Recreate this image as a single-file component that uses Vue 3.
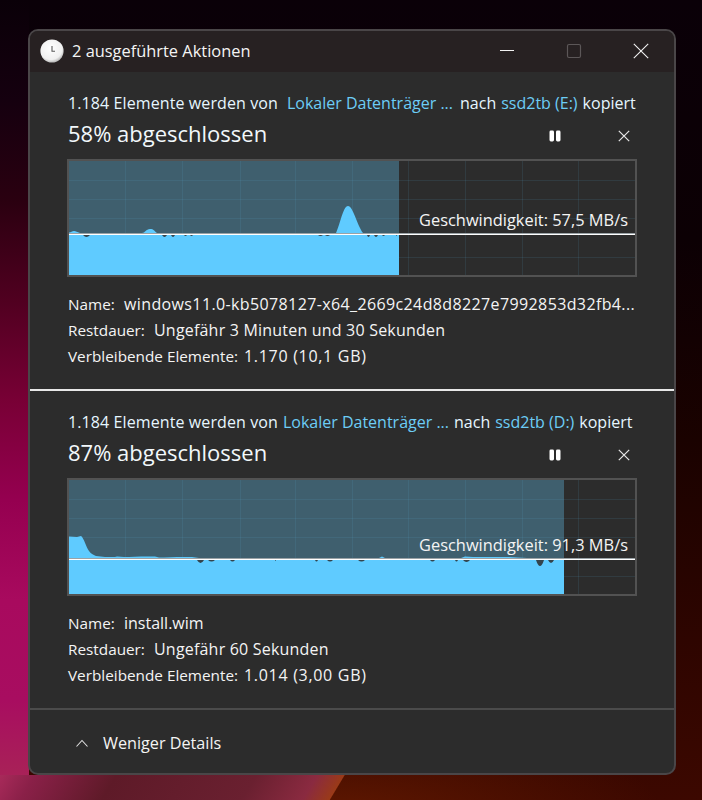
<script setup>
const gridX = [56, 113, 171, 226, 283, 339, 396, 453, 509]
const gridY = [19, 38, 57, 96]

const jobs = [
  {
    source: 'Lokaler Datenträger ...',
    target: 'ssd2tb (E:)',
    percent: 58,
    speed: '57,5 MB/s',
    details: [
      { label: 'Name:', value: 'windows11.0-kb5078127-x64_2669c24d8d8227e7992853d32fb4...', track: 0.38 },
      { label: 'Restdauer:', value: 'Ungefähr 3 Minuten und 30 Sekunden', track: 0.2 },
      { label: 'Verbleibende Elemente:', value: '1.170 (10,1 GB)', track: 0.7 }
    ],
    fillW: 330,
    lineY: 73,
    sourceGap: 9,
    midGap: 7,
    area: 'M0 114V71.5C2 71.5 3 70 5 70S8 71 11 72H73C76 72 77 68 81 68S85 70 88 72H267C271 64 274 45 279 45S288 64 294 72H330V114Z',
    dips: [[14, 7, 2], [93, 5, 2], [102, 4, 2], [115, 3, 1], [121, 3, 1], [249, 5, 1], [256, 5, 1], [298, 3, 2], [305, 4, 2], [313, 3, 1], [327, 1, 1]]
  },
  {
    source: 'Lokaler Datenträger ...',
    target: 'ssd2tb (D:)',
    percent: 87,
    speed: '91,3 MB/s',
    details: [
      { label: 'Name:', value: 'install.wim', track: 0 },
      { label: 'Restdauer:', value: 'Ungefähr 60 Sekunden', track: 0.2 },
      { label: 'Verbleibende Elemente:', value: '1.014 (3,00 GB)', track: 0.7 }
    ],
    fillW: 495,
    lineY: 79,
    sourceGap: 5,
    midGap: 5,
    area: 'M0 114V56.5L8 57L12 56C15 58 17 67 20 71C22 74 25 75 27 76L36 77H46L48 76.5L55 77H60L72 76.5L86 76.5L90 77.5H95L108 77H123L130 78H310L313 76.5L316 78H392L396 76.5L404 77H440L458 78H495V114Z',
    dips: [[128, 7, 3], [139, 7, 1.5], [161, 5, 1.5], [206, 1, 1], [246, 3, 1.5], [258, 6, 1.5], [289, 7, 1.5], [361, 5, 1.5], [386, 3, 1.5], [394, 7, 2], [467, 8, 6], [479, 6, 3]]
  }
]
</script>

<template>
  <div class="desktop">
    <div class="window">
      <header class="titlebar">
        <svg class="clock" viewBox="0 0 24 24" width="24" height="24" aria-hidden="true">
          <defs>
            <radialGradient id="clockFace" cx="45%" cy="38%" r="68%">
              <stop offset="0" stop-color="#ffffff" />
              <stop offset="0.72" stop-color="#f0f0f0" />
              <stop offset="1" stop-color="#9c9c9c" />
            </radialGradient>
          </defs>
          <circle cx="12" cy="12" r="11.6" fill="url(#clockFace)" />
          <path d="M12 7V12.3H15" fill="none" stroke="#5a5a5a" stroke-width="1.1" />
        </svg>
        <span class="title">2 ausgeführte Aktionen</span>
        <div class="controls">
          <svg viewBox="0 0 16 16" width="16" height="16" aria-hidden="true"><path d="M1 7.5H15" stroke="#f2f2f2" stroke-width="1" /></svg>
          <svg viewBox="0 0 16 16" width="16" height="16" aria-hidden="true"><rect x="1.5" y="1.5" width="13" height="13" rx="1.5" fill="none" stroke="#5c5758" stroke-width="1.2" /></svg>
          <svg viewBox="0 0 16 16" width="16" height="16" aria-hidden="true"><path d="M.8.8L15.2 15.2M15.2.8L.8 15.2" stroke="#f2f2f2" stroke-width="1.1" /></svg>
        </div>
      </header>

      <section v-for="job in jobs" :key="job.target" class="job">
        <div class="summary">
          <span class="lead">1.184 Elemente werden von</span>
          <span class="link" :style="{ marginLeft: job.sourceGap + 'px' }">{{ job.source }}</span>
          <span :style="{ marginLeft: job.midGap + 'px' }">nach</span>
          <span class="link gap">{{ job.target }}</span>
          <span class="gap">kopiert</span>
        </div>
        <div class="status">
          <h2>{{ job.percent }}% abgeschlossen</h2>
          <div class="actions">
            <svg viewBox="0 0 12 12" width="12" height="12" aria-hidden="true">
              <rect x="0.5" y="0.5" width="4.5" height="11" rx="1.4" fill="#fff" />
              <rect x="7" y="0.5" width="4.5" height="11" rx="1.4" fill="#fff" />
            </svg>
            <svg viewBox="0 0 12 12" width="12" height="12" aria-hidden="true">
              <path d="M.8.8L11.2 11.2M11.2.8L.8 11.2" stroke="#e8e8e8" stroke-width="1.2" />
            </svg>
          </div>
        </div>
        <div class="chart">
          <svg viewBox="0 0 566 114" width="566" height="114" aria-hidden="true">
            <rect :width="job.fillW" height="114" fill="#3f5f6e" />
            <path v-for="x in gridX" :key="x" :d="`M${x + 0.5} 0V114`" stroke="#5cb8e6" stroke-opacity="0.11" />
            <path v-for="y in gridY" :key="y" :d="`M0 ${y + 0.5}H566`" stroke="#5cb8e6" stroke-opacity="0.11" />
            <path :d="job.area" fill="#5fcbff" />
            <path v-for="d in job.dips" :key="d[0]" :d="`M${d[0]} ${job.lineY + 1}Q${d[0] + d[1] / 2} ${job.lineY + 1 + d[2] * 2} ${d[0] + d[1]} ${job.lineY + 1}z`" fill="#33444d" />
            <path :d="`M0 ${job.lineY - 0.5}H566`" stroke="#9aa2a6" stroke-width="1" />
            <path :d="`M0 ${job.lineY + 0.5}H566`" stroke="#ffffff" stroke-width="1" />
          </svg>
          <span class="speed" :style="{ top: job.lineY - 25 + 'px' }">Geschwindigkeit: {{ job.speed }}</span>
        </div>
        <dl class="details">
          <div v-for="row in job.details" :key="row.label" class="detail">
            <dt>{{ row.label }}</dt>
            <dd :style="{ letterSpacing: row.track + 'px' }">{{ row.value }}</dd>
          </div>
        </dl>
      </section>

      <footer class="footer">
        <svg viewBox="0 0 14 8" width="14" height="8" aria-hidden="true">
          <path d="M1.5 7.5L7 1.5L12.5 7.5" fill="none" stroke="#e0e0e0" stroke-width="1.1" />
        </svg>
        <span>Weniger Details</span>
      </footer>
    </div>
  </div>
</template>

<style>
html, body { margin: 0; padding: 0; background: #0a0008; }
</style>

<style scoped>
.desktop {
  width: 702px;
  height: 800px;
  padding: 29px 0 0 28px;
  box-sizing: border-box;
  overflow: hidden;
  font-family: "Open Sans", "Noto Sans", sans-serif;
  color: #f4f4f4;
  background:
    linear-gradient(121deg, #a82a5a 0, #8a2048 30px, #5e1a28 100px, #6a2030 220px, #8a2a40 272px, #9a3a18 295px, rgba(0, 0, 0, 0) 296px) 0 775px / 350px 25px no-repeat,
    linear-gradient(180deg, #0a0008 0, #15000f 100px, #2a0010 200px, #500020 300px, #780035 400px, #950050 500px, #a80a5e 600px, #a80d60 700px, #a82058 770px, #a82a5a 800px) 0 0 / 29px 800px no-repeat,
    radial-gradient(ellipse 320px 90px at 340px 810px, rgba(120, 35, 0, 0.55), rgba(120, 35, 0, 0) 100%),
    linear-gradient(180deg, #0a0008 0%, #0c0004 30%, #1a0200 55%, #2e0500 80%, #3c0800 100%);
}
.window {
  width: 648px;
  height: 746px;
  box-sizing: border-box;
  border: 2px solid #4a4648;
  border-radius: 10px;
  background: #2c2c2c;
  overflow: hidden;
  display: flex;
  flex-direction: column;
}
.titlebar {
  height: 41px;
  flex: none;
  box-sizing: border-box;
  padding: 0 0 2px 10px;
  display: flex;
  align-items: center;
  background: #272122;
}
.title {
  margin-left: 8px;
  font-size: 16.4px;
}
.controls {
  margin-left: auto;
  display: flex;
  gap: 51px;
  padding-right: 25px;
  align-items: center;
}
.job {
  height: 319px;
  flex: none;
  box-sizing: border-box;
  padding: 19px 38px 0 37px;
  border-bottom: 2px solid #e8e8e8;
}
.job:nth-of-type(2) {
  border-bottom-color: #4b4b4b;
}
.summary {
  display: flex;
  align-items: baseline;
  padding-left: 1px;
  white-space: nowrap;
  font-size: 16px;
  line-height: 24px;
  color: #e6f6ff;
}
.lead { letter-spacing: 0.1px; }
.link { color: #6ccdf6; }
.gap { margin-left: 5px; }
.status {
  display: flex;
  justify-content: space-between;
  align-items: center;
  height: 36px;
  padding-left: 1px;
}
h2 {
  margin: 0;
  font-size: 22px;
  font-weight: 400;
  color: #f2f8fb;
}
.actions {
  display: flex;
  gap: 57px;
  padding: 6px 6px 0 0;
  align-items: center;
}
.chart {
  position: relative;
  width: 570px;
  height: 118px;
  margin-top: 8px;
  box-sizing: border-box;
  border: 2px solid #525252;
  background: #2c2c2c;
}
.chart svg { display: block; }
.speed {
  position: absolute;
  right: 7px;
  font-size: 16.4px;
  line-height: 22px;
  white-space: nowrap;
  color: #f4f4f4;
}
.details {
  margin: 14px 0 0;
  padding-left: 1px;
}
.detail {
  display: flex;
  height: 26px;
  align-items: center;
  white-space: nowrap;
  font-size: 15.3px;
}
.detail:nth-child(1) dt { width: 56px; }
.detail:nth-child(2) dt { width: 86px; }
.detail:nth-child(3) dt { width: 176px; }
dd {
  margin: 0;
  font-size: 16px;
}
.footer {
  flex: 1;
  display: flex;
  align-items: center;
  padding: 3px 0 0 45px;
  gap: 14px;
  font-size: 16.2px;
}
</style>
